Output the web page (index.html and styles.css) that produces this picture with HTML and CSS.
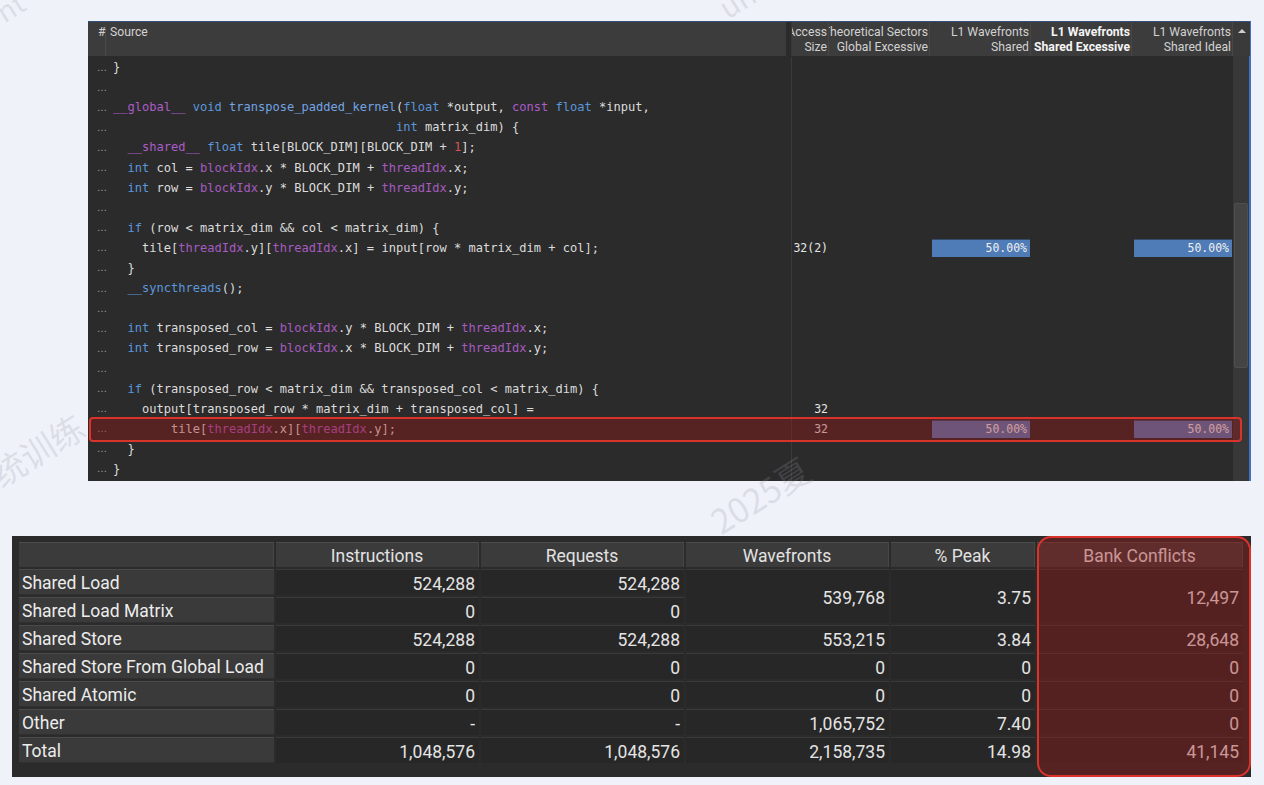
FILE: index.html
```html
<!DOCTYPE html>
<html>
<head>
<meta charset="utf-8">
<link rel="stylesheet" href="styles.css">
</head>
<body>
<div class="page">
  <section class="src-panel">
    <div class="head">
      <div class="h-src"><span class="h-hash">#</span><span class="h-title">Source</span></div>
      <div class="h-split"></div>
      <div class="h-col"><span>Access</span><span>Size</span></div>
      <div class="h-col"><span>Theoretical Sectors</span><span>Global Excessive</span></div>
      <div class="h-col"><span>L1 Wavefronts</span><span>Shared</span></div>
      <div class="h-col bold"><span>L1 Wavefronts</span><span>Shared Excessive</span></div>
      <div class="h-col"><span>L1 Wavefronts</span><span>Shared Ideal</span></div>
      <div class="h-scroll"><span class="arrow-up"></span></div>
    </div>
    <div class="body">
      <div class="rows">
        <div class="row"><span class="ln">…</span><span class="code">}</span><span class="sp"></span><span class="m"></span><span class="m"></span><span class="m"></span><span class="m"></span><span class="m"></span></div>
        <div class="row"><span class="ln">…</span><span class="code"></span><span class="sp"></span><span class="m"></span><span class="m"></span><span class="m"></span><span class="m"></span><span class="m"></span></div>
        <div class="row"><span class="ln">…</span><span class="code"><span class="kp">__global__</span> <span class="kw">void</span> <span class="fn">transpose_padded_kernel</span>(<span class="kw">float</span> *output, <span class="kp">const</span> <span class="kw">float</span> *input,</span><span class="sp"></span><span class="m"></span><span class="m"></span><span class="m"></span><span class="m"></span><span class="m"></span></div>
        <div class="row"><span class="ln">…</span><span class="code">                                       <span class="kw">int</span> matrix_dim) {</span><span class="sp"></span><span class="m"></span><span class="m"></span><span class="m"></span><span class="m"></span><span class="m"></span></div>
        <div class="row"><span class="ln">…</span><span class="code">  <span class="kp">__shared__</span> <span class="kw">float</span> tile[BLOCK_DIM][BLOCK_DIM + <span class="nm">1</span>];</span><span class="sp"></span><span class="m"></span><span class="m"></span><span class="m"></span><span class="m"></span><span class="m"></span></div>
        <div class="row"><span class="ln">…</span><span class="code">  <span class="kw">int</span> col = <span class="bi">blockIdx</span>.x * BLOCK_DIM + <span class="bi">threadIdx</span>.x;</span><span class="sp"></span><span class="m"></span><span class="m"></span><span class="m"></span><span class="m"></span><span class="m"></span></div>
        <div class="row"><span class="ln">…</span><span class="code">  <span class="kw">int</span> row = <span class="bi">blockIdx</span>.y * BLOCK_DIM + <span class="bi">threadIdx</span>.y;</span><span class="sp"></span><span class="m"></span><span class="m"></span><span class="m"></span><span class="m"></span><span class="m"></span></div>
        <div class="row"><span class="ln">…</span><span class="code"></span><span class="sp"></span><span class="m"></span><span class="m"></span><span class="m"></span><span class="m"></span><span class="m"></span></div>
        <div class="row"><span class="ln">…</span><span class="code">  <span class="kw">if</span> (row &lt; matrix_dim &amp;&amp; col &lt; matrix_dim) {</span><span class="sp"></span><span class="m"></span><span class="m"></span><span class="m"></span><span class="m"></span><span class="m"></span></div>
        <div class="row"><span class="ln">…</span><span class="code">    tile[<span class="bi">threadIdx</span>.y][<span class="bi">threadIdx</span>.x] = input[row * matrix_dim + col];</span><span class="sp"></span><span class="m">32(2)</span><span class="m"></span><span class="m"><span class="bar">50.00%</span></span><span class="m"></span><span class="m"><span class="bar">50.00%</span></span></div>
        <div class="row"><span class="ln">…</span><span class="code">  }</span><span class="sp"></span><span class="m"></span><span class="m"></span><span class="m"></span><span class="m"></span><span class="m"></span></div>
        <div class="row"><span class="ln">…</span><span class="code">  <span class="kw">__syncthreads</span>();</span><span class="sp"></span><span class="m"></span><span class="m"></span><span class="m"></span><span class="m"></span><span class="m"></span></div>
        <div class="row"><span class="ln">…</span><span class="code"></span><span class="sp"></span><span class="m"></span><span class="m"></span><span class="m"></span><span class="m"></span><span class="m"></span></div>
        <div class="row"><span class="ln">…</span><span class="code">  <span class="kw">int</span> transposed_col = <span class="bi">blockIdx</span>.y * BLOCK_DIM + <span class="bi">threadIdx</span>.x;</span><span class="sp"></span><span class="m"></span><span class="m"></span><span class="m"></span><span class="m"></span><span class="m"></span></div>
        <div class="row"><span class="ln">…</span><span class="code">  <span class="kw">int</span> transposed_row = <span class="bi">blockIdx</span>.x * BLOCK_DIM + <span class="bi">threadIdx</span>.y;</span><span class="sp"></span><span class="m"></span><span class="m"></span><span class="m"></span><span class="m"></span><span class="m"></span></div>
        <div class="row"><span class="ln">…</span><span class="code"></span><span class="sp"></span><span class="m"></span><span class="m"></span><span class="m"></span><span class="m"></span><span class="m"></span></div>
        <div class="row"><span class="ln">…</span><span class="code">  <span class="kw">if</span> (transposed_row &lt; matrix_dim &amp;&amp; transposed_col &lt; matrix_dim) {</span><span class="sp"></span><span class="m"></span><span class="m"></span><span class="m"></span><span class="m"></span><span class="m"></span></div>
        <div class="row"><span class="ln">…</span><span class="code">    output[transposed_row * matrix_dim + transposed_col] =</span><span class="sp"></span><span class="m">32</span><span class="m"></span><span class="m"></span><span class="m"></span><span class="m"></span></div>
        <div class="row hl"><span class="ln">…</span><span class="code">        tile[<span class="bi">threadIdx</span>.x][<span class="bi">threadIdx</span>.y];</span><span class="sp"></span><span class="m">32</span><span class="m"></span><span class="m"><span class="bar">50.00%</span></span><span class="m"></span><span class="m"><span class="bar">50.00%</span></span></div>
        <div class="row"><span class="ln">…</span><span class="code">  }</span><span class="sp"></span><span class="m"></span><span class="m"></span><span class="m"></span><span class="m"></span><span class="m"></span></div>
        <div class="row"><span class="ln">…</span><span class="code">}</span><span class="sp"></span><span class="m"></span><span class="m"></span><span class="m"></span><span class="m"></span><span class="m"></span></div>
      </div>
      <div class="scrollbar"><div class="thumb"></div></div>
    </div>
  </section>

  <section class="mem-panel">
    <div class="mem-table">
      <div class="th first"></div>
      <div class="th">Instructions</div>
      <div class="th">Requests</div>
      <div class="th">Wavefronts</div>
      <div class="th">% Peak</div>
      <div class="th">Bank Conflicts</div>

      <div class="lbl">Shared Load</div>
      <div class="num">524,288</div>
      <div class="num">524,288</div>
      <div class="num span2">539,768</div>
      <div class="num span2">3.75</div>
      <div class="num span2">12,497</div>

      <div class="lbl">Shared Load Matrix</div>
      <div class="num">0</div>
      <div class="num">0</div>

      <div class="lbl">Shared Store</div>
      <div class="num">524,288</div>
      <div class="num">524,288</div>
      <div class="num">553,215</div>
      <div class="num">3.84</div>
      <div class="num">28,648</div>

      <div class="lbl">Shared Store From Global Load</div>
      <div class="num">0</div>
      <div class="num">0</div>
      <div class="num">0</div>
      <div class="num">0</div>
      <div class="num">0</div>

      <div class="lbl">Shared Atomic</div>
      <div class="num">0</div>
      <div class="num">0</div>
      <div class="num">0</div>
      <div class="num">0</div>
      <div class="num">0</div>

      <div class="lbl">Other</div>
      <div class="num">-</div>
      <div class="num">-</div>
      <div class="num">1,065,752</div>
      <div class="num">7.40</div>
      <div class="num">0</div>

      <div class="lbl">Total</div>
      <div class="num">1,048,576</div>
      <div class="num">1,048,576</div>
      <div class="num">2,158,735</div>
      <div class="num">14.98</div>
      <div class="num">41,145</div>
    </div>
    <div class="bank-mark"></div>
  </section>

  <div class="wm wm1">nt</div>
  <div class="wm wm2">unm</div>
  <div class="wm wm3">统训练</div>
  <div class="wm wm4">2025夏</div>
</div>
</body>
</html>
```
FILE: styles.css
```css
* { box-sizing: border-box; }
html, body { margin: 0; padding: 0; }
body {
  background: #eff2f9;
  width: 1264px;
  height: 785px;
  overflow: hidden;
  font-family: Roboto, "Liberation Sans", sans-serif;
}
.page {
  position: relative;
  width: 1264px;
  height: 785px;
  padding-top: 21px;
}

/* ---------- source panel ---------- */
.src-panel {
  margin-left: 88px;
  width: 1163px;
  height: 460px;
  background: #2b2b2b;
  border-top: 1px solid #30507f;
  border-right: 2px solid #3f72c4;
  display: flex;
  flex-direction: column;
}
.head {
  display: grid;
  grid-template-columns: 698px 6px 37px 101px 101px 101px 101px 17px;
  height: 34px;
  background: #3c3c3c;
  color: #d2d2d2;
  font-size: 12.2px;
  line-height: 15px;
}
.h-src {
  display: flex;
  padding-top: 3px;
}
.h-hash {
  width: 18px;
  padding-left: 10px;
  border-right: 1px solid #4a4a4a;
}
.h-title { padding-left: 4px; }
.h-split { background: #2b2b2b; border-right: 1px solid #383838; }
.h-col {
  display: flex;
  flex-direction: column;
  align-items: flex-end;
  padding: 3px 1px 0 0;
  overflow: hidden;
  white-space: nowrap;
  border-right: 1px solid #474747;
}
.h-col.bold { font-weight: 700; color: #f4f4f4; }
.h-scroll {
  background: #3a3a3a;
  display: flex;
  justify-content: center;
  padding-top: 7px;
}
.arrow-up {
  width: 0; height: 0;
  border-left: 4px solid transparent;
  border-right: 4px solid transparent;
  border-bottom: 4px solid #cfcfcf;
}

.body {
  flex: 1;
  display: flex;
  overflow: visible;
}
.rows {
  width: 1145px;
  padding-top: 1px;
}
.row {
  position: relative;
  display: grid;
  grid-template-columns: 25px 673px 6px 37px 101px 101px 101px 101px;
  height: 20.1px;
  align-items: center;
}
.ln {
  color: #9a9a9a;
  font-size: 10px;
  padding-left: 9px;
  font-family: "DejaVu Sans", sans-serif;
}
.code {
  font-family: "DejaVu Sans Mono", monospace;
  font-size: 12.05px;
  white-space: pre;
  color: #dcdcdc;
  overflow: hidden;
}
.kw { color: #5b97dc; }
.fn { color: #72a4e4; }
.kp { color: #ad5cc9; }
.bi { color: #a65bc0; }
.nm { color: #d9534f; }
.sp {
  align-self: stretch;
  border-right: 1px solid #3a3a3a;
}
.m {
  align-self: stretch;
  display: flex;
  align-items: center;
  justify-content: flex-end;
  overflow: hidden;
  white-space: nowrap;
  font-family: "DejaVu Sans Mono", monospace;
  font-size: 11.5px;
  color: #e6e6e6;
  padding-right: 1px;
}
.bar {
  width: 98px;
  height: 18px;
  background: #4f7bb6;
  border-top: 1px solid #354b6c;
  color: #f0f0f0;
  text-align: right;
  padding-right: 3px;
  line-height: 17px;
}
.row.hl::after {
  content: "";
  position: absolute;
  left: 1px;
  right: -9px;
  top: -2px;
  bottom: -3px;
  background: rgba(160, 22, 22, 0.38);
  border: 2px solid #d8342c;
  border-radius: 4px;
  z-index: 2;
}
.scrollbar {
  width: 16px;
  background: #383838;
  position: relative;
  padding-top: 147px;
}
.thumb {
  width: 14px;
  margin-left: 1px;
  height: 165px;
  background: #444;
  border: 1px solid #4e4e4e;
  border-radius: 2px;
}

/* ---------- memory table ---------- */
.mem-panel {
  position: relative;
  margin: 55px 0 0 12px;
  width: 1239px;
  height: 241px;
  background: #2b2b2b;
  padding: 6px 0 0 7px;
}
.mem-table {
  display: grid;
  grid-template-columns: 255px 203px 203px 203px 144px 206px;
  grid-template-rows: 25px repeat(7, 26px);
  gap: 2px;
  font-size: 17.5px;
  color: #e4e4e4;
}
.th {
  background: #3b3b3b;
  border-top: 1px solid #4c4c4c;
  border-right: 1px solid #474747;
  text-align: center;
  line-height: 27px;
  color: #e2e2e2;
}
.lbl {
  background: #3a3a3a;
  border-top: 1px solid #4a4a4a;
  border-bottom: 1px solid #303030;
  padding-left: 3px;
  line-height: 26px;
  white-space: nowrap;
  color: #ececec;
}
.num {
  background: #272727;
  border-top: 1px solid #3a3a3a;
  padding-right: 4px;
  padding-top: 2px;
  display: flex;
  align-items: center;
  justify-content: flex-end;
}
.num.span2 { grid-row: span 2; }
.bank-mark {
  position: absolute;
  left: 1025px;
  top: 0;
  width: 214px;
  height: 241px;
  background: rgba(160, 22, 22, 0.38);
  border: 2px solid #d8342c;
  border-radius: 14px;
}

/* ---------- watermarks ---------- */
.wm {
  position: absolute;
  color: rgba(150, 150, 165, 0.22);
  font-family: "Noto Sans CJK SC", sans-serif;
  font-size: 34px;
  transform: rotate(-32deg);
  pointer-events: none;
  white-space: nowrap;
}
.wm1 { left: -4px; top: -14px; font-size: 28px; }
.wm2 { left: 716px; top: -30px; font-size: 30px; }
.wm3 { left: -14px; top: 425px; }
.wm4 { left: 705px; top: 470px; }
```
